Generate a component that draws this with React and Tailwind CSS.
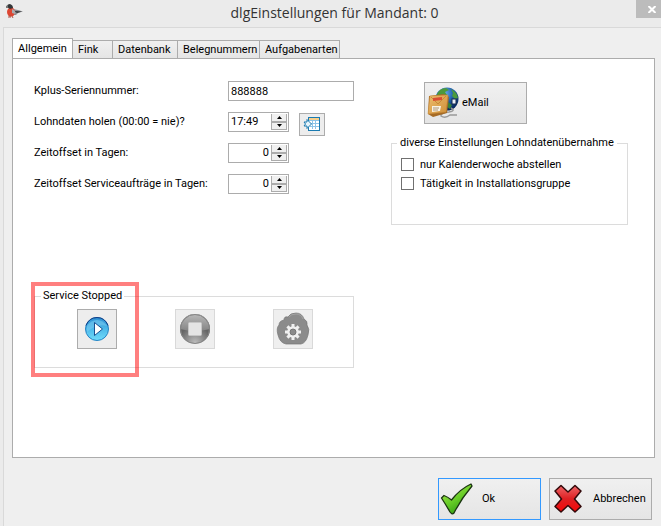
import React, { useState } from 'react';

const tabs = [
    { name: 'Allgemein', width: 'w-[61px]' },
    { name: 'Fink', width: 'w-10' },
    { name: 'Datenbank', width: 'w-[65px]' },
    { name: 'Belegnummern', width: 'w-[82px]' },
    { name: 'Aufgabenarten', width: 'w-20' },
];

const BirdIcon = () => (
    <svg width="18" height="16" viewBox="0 0 18 16" aria-hidden="true">
        <path d="M7 5 L12 6 L17 7.5 L12 9 L10 11 L5 11 Z" fill="#8d8f94" />
        <path d="M8 7 L16 7.5 L11 9 Z" fill="#333" />
        <ellipse cx="5" cy="8" rx="4" ry="4.5" fill="#dd4632" />
        <path d="M6 5 Q10 6 9 10 L6 9 Z" fill="#a9aaae" />
        <path d="M1 3 Q1 0 4 0 Q7 1 7 4 L4 5 Z" fill="#333638" />
        <path d="M0 2 L2 1 L2 4 L0 4 Z" fill="#777" />
        <path d="M2 13 H5 M6 12 L7 14 M4 11 L4 13" stroke="#ad5145" fill="none" />
    </svg>
);

const ImportTableIcon = () => (
    <svg width="18" height="16" viewBox="0 0 18 16" aria-hidden="true">
        <rect x="5.5" y="1.5" width="11" height="13" fill="#fff" stroke="#1a7ab0" />
        <rect x="6" y="2" width="10" height="2" fill="#f6cf8b" />
        <path d="M6 4.5 H16 M7 7.5 H16 M7 10.5 H16 M9.5 4 V13 M12.5 4 V13" stroke="#8cc3e8" />
        <path d="M1 6 H4 V3.5 L8.5 8 L4 12.5 V10 H1 L2.5 8 Z" fill="#e6f4fb" stroke="#1a7ab0" />
    </svg>
);

const MailIcon = () => (
    <svg width="34" height="34" viewBox="0 0 34 34" aria-hidden="true">
        <defs>
            <radialGradient id="globe" cx="0.4" cy="0.25" r="0.75">
                <stop offset="0" stopColor="#69aee8" />
                <stop offset="0.5" stopColor="#2161ac" />
                <stop offset="1" stopColor="#06245a" />
            </radialGradient>
            <linearGradient id="parcel" x1="0" y1="0" x2="1" y2="1">
                <stop offset="0" stopColor="#edbd6e" />
                <stop offset="1" stopColor="#cf8f38" />
            </linearGradient>
        </defs>
        <circle cx="20" cy="13" r="11.5" fill="url(#globe)" />
        <path d="M10 8 Q13 2 19 2 L22 4 L18 6 L20 9 L16 11 L10 10 Z M24 3 Q30 6 31 12 L28 13 L25 10 L26 7 Z" fill="#4c9a3c" />
        <path d="M21 16 L25 19 L23 23 L20 21 Z" fill="#39823a" />
        <rect x="25" y="13" width="4" height="5" fill="#e9eef5" stroke="#172b4e" />
        <path d="M24 22 Q29 25 22 26 Q13 27 14 30 Q18 33 23 29 L30 29" fill="none" stroke="#999" strokeWidth="1.5" />
        <path d="M2 10 L17 8 L22 11 L20 27 L6 31 L1 28 Z" fill="#a66b25" />
        <path d="M3 10 L21 9 L19 26 L1 28 Z" fill="url(#parcel)" stroke="#c88b38" strokeWidth="0.5" />
        <path d="M4 11 L11 18 L19 10" fill="none" stroke="#c88b38" />
        <path d="M6 12 L15 11 L15 14 L6 15 Z" fill="#d94d32" />
        <path d="M5 20 L14 20 L13 25 L5 26 Z" fill="#f8f2e4" />
        <path d="M6 22 L12 22 M6 24 L11 24" stroke="#8d6d4a" strokeWidth="0.7" />
    </svg>
);

const PlayIcon = () => (
    <svg width="26" height="26" viewBox="0 0 26 26" aria-hidden="true">
        <defs>
            <linearGradient id="play" x1="0" y1="0" x2="0" y2="1">
                <stop offset="0" stopColor="#2e8fd2" />
                <stop offset="0.5" stopColor="#4db9e9" />
                <stop offset="1" stopColor="#71dcfb" />
            </linearGradient>
        </defs>
        <circle cx="13" cy="13" r="11.5" fill="url(#play)" stroke="#2583c4" />
        <path d="M2 9.5 Q5 1.5 13 1.5 Q21 1.5 24 9.5" fill="none" stroke="#123f88" />
        <path d="M3 10 Q7 4 13 4 Q19 4 23 10 Q13 7 3 16 Z" fill="#78c9f0" opacity="0.6" />
        <path d="M10.5 6.5 L18.5 13 L10.5 19.5 Z" fill="#fff" stroke="#174f91" />
    </svg>
);

const StopIcon = () => (
    <svg width="32" height="32" viewBox="0 0 32 32" aria-hidden="true">
        <defs>
            <linearGradient id="stopTop" x1="0" y1="0" x2="0" y2="1">
                <stop offset="0" stopColor="#b9b9b9" />
                <stop offset="1" stopColor="#848484" />
            </linearGradient>
            <radialGradient id="stopBottom" cx="0.5" cy="0.95" r="0.55">
                <stop offset="0" stopColor="#bcbcbc" />
                <stop offset="1" stopColor="#656565" />
            </radialGradient>
        </defs>
        <circle cx="16" cy="16" r="15" fill="url(#stopBottom)" />
        <path d="M1 16 A15 15 0 0 1 31 16 Q16 20 1 16 Z" fill="url(#stopTop)" />
        <circle cx="16" cy="16" r="14.5" fill="none" stroke="#858585" />
        <rect x="9.5" y="9.5" width="13" height="13" rx="1" fill="#e4e4e4" stroke="#c6c6c6" />
    </svg>
);

const CloudGearIcon = () => (
    <svg width="34" height="34" viewBox="0 0 34 34" aria-hidden="true">
        <path
            d="M10 32 Q4 31 2 23 Q0 16 3 13 Q3 9 8 8 Q8 4 12 5 Q14 1 20 1 Q26 1 28 7 Q32 9 31 13 Q34 17 32 23 Q30 31 25 32 Z"
            fill="#8b8b8b"
            stroke="#777"
            strokeWidth="0.7"
        />
        <path d="M13 5 Q15 2 20 2 Q25 2 27 7" fill="none" stroke="#a3a3a3" />
        <g stroke="#f0f0f0" strokeWidth="3">
            <path d="M17 12 V28 M9 20 H25 M11.4 14.4 L22.6 25.6 M22.6 14.4 L11.4 25.6" />
        </g>
        <circle cx="17" cy="20" r="5.8" fill="#f0f0f0" />
        <circle cx="17" cy="20" r="3" fill="#8b8b8b" stroke="#777" />
    </svg>
);

const CheckIcon = () => (
    <svg width="34" height="34" viewBox="0 0 34 34" aria-hidden="true">
        <defs>
            <linearGradient id="check" x1="0" y1="0" x2="0.6" y2="1">
                <stop offset="0" stopColor="#b8ee55" />
                <stop offset="0.6" stopColor="#65cb26" />
                <stop offset="1" stopColor="#2f9b12" />
            </linearGradient>
        </defs>
        <path
            d="M1.5 16 L4 13.5 Q8 15 11.5 18 Q20 7 31 2 L32 4 Q21 17 14 31 Q12 33 10 30 Q6 23 1.5 16 Z"
            fill="url(#check)"
            stroke="#1b3511"
            strokeWidth="1.3"
            strokeLinejoin="round"
        />
    </svg>
);

const CrossIcon = () => (
    <svg width="30" height="30" viewBox="0 0 30 30" aria-hidden="true">
        <defs>
            <linearGradient id="cross" x1="0" y1="0" x2="0" y2="1">
                <stop offset="0" stopColor="#ed6668" />
                <stop offset="0.5" stopColor="#de2023" />
                <stop offset="1" stopColor="#f50707" />
            </linearGradient>
        </defs>
        <path
            d="M8 1.5 L15 8 L22 1.5 L28 7 L21.5 15 L28 22.5 L22 28 L15 21.5 L8 28 L2 22.5 L8.5 15 L2 7 Z"
            fill="url(#cross)"
            stroke="#32090a"
            strokeWidth="1.5"
            strokeLinejoin="round"
        />
    </svg>
);

const SpinButtons = ({ label, onUp, onDown }) => (
    <span className="flex w-4 flex-col border-l border-[#acacac]">
        <button
            type="button"
            aria-label={`${label} erhöhen`}
            onClick={onUp}
            className="flex flex-1 items-center justify-center border-r border-b border-[#acacac] bg-[#f0f0f0]">
            <svg width="5" height="3" viewBox="0 0 5 3"><path d="M0 3 L2.5 0 L5 3 Z" /></svg>
        </button>
        <button
            type="button"
            aria-label={`${label} verringern`}
            onClick={onDown}
            className="flex flex-1 items-center justify-center border-t border-r border-b border-[#acacac] bg-[#f0f0f0]">
            <svg width="5" height="3" viewBox="0 0 5 3"><path d="M0 0 L2.5 3 L5 0 Z" /></svg>
        </button>
    </span>
);

const SpinField = ({ id, label, value, setValue, align, onStep }) => (
    <span className="flex h-5 w-[61px] border border-[#acacac] bg-white p-px">
        <input
            id={id}
            value={value}
            onChange={(e) => setValue(e.target.value)}
            className={`min-w-0 flex-1 outline-none ${align === 'right' ? 'pr-0.5 text-right' : 'pl-px'}`}
        />
        <SpinButtons label={label} onUp={() => onStep(1)} onDown={() => onStep(-1)} />
    </span>
);

const CheckRow = ({ label }) => (
    <label className="flex h-[19px] items-center gap-1.5">
        <input type="checkbox" className="size-[13px] appearance-none border border-[#707070] bg-white checked:bg-[#707070]" />
        {label}
    </label>
);

const stepTime = (time, step) => {
    const [hours, minutes] = time.split(':').map(Number);
    const total = (hours * 60 + minutes + step + 1440) % 1440;
    return `${String(Math.floor(total / 60)).padStart(2, '0')}:${String(total % 60).padStart(2, '0')}`;
};

const App = () => {
    const [activeTab, setActiveTab] = useState('Allgemein');
    const [serial, setSerial] = useState('888888');
    const [time, setTime] = useState('17:49');
    const [offset, setOffset] = useState('0');
    const [serviceOffset, setServiceOffset] = useState('0');

    return (
        <div className="flex min-h-screen flex-col bg-[#ebebeb] font-['Roboto','Liberation_Sans',sans-serif] text-[11px] leading-4 text-black">
            <header className="flex h-[27px] items-start">
                <div className="w-[47px] pt-1 pl-1.5">
                    <BirdIcon />
                </div>
                <h1 className="flex-1 pl-2 text-center font-['Open_Sans',sans-serif] text-[14px] leading-[26px] text-[#333]">
                    dlgEinstellungen für Mandant: 0
                </h1>
                <div className="flex w-[47px] justify-end">
                    <button type="button" aria-label="Schließen" className="flex h-[18px] w-[25px] items-center justify-center bg-[#bcbcbc] pl-1.5">
                        <svg width="8" height="7" viewBox="0 0 8 7" aria-hidden="true">
                            <path d="M0.5 0 L7.5 7 M7.5 0 L0.5 7" stroke="#fff" strokeWidth="2" />
                        </svg>
                    </button>
                </div>
            </header>

            <div className="ml-[3px] flex flex-1 flex-col border-t border-l border-[#d9d9d9] bg-[#efefef] pt-2.5 pr-1.5 pl-2">
                <div role="tablist" className="-mb-px flex items-end">
                    {tabs.map((tab) => (
                        <button
                            key={tab.name}
                            type="button"
                            role="tab"
                            aria-selected={activeTab === tab.name}
                            onClick={() => setActiveTab(tab.name)}
                            className={`border border-[#acacac] whitespace-nowrap ${tab.width} ${
                                activeTab === tab.name
                                    ? 'h-[21px] border-b-white bg-white'
                                    : 'h-[19px] border-l-0 bg-linear-to-b from-[#f0f0f0] to-[#e5e5e5] pl-[5px] text-left'
                            }`}>
                            {tab.name}
                        </button>
                    ))}
                </div>

                <main className="flex-1 border border-[#acacac] bg-white pt-[22px] pr-[26px] pb-20 pl-[21px]">
                    <div className="grid grid-cols-[320px_1fr] gap-[37px]">
                        <div>
                            <div className="flex flex-col gap-[11px]">
                                <div className="flex h-5 items-center">
                                    <label htmlFor="serial" className="w-[194px]">Kplus-Seriennummer:</label>
                                    <input
                                        id="serial"
                                        value={serial}
                                        onChange={(e) => setSerial(e.target.value)}
                                        className="h-5 min-w-0 flex-1 border border-[#acacac] px-0.5 outline-none"
                                    />
                                </div>
                                <div className="flex h-5 items-center">
                                    <label htmlFor="time" className="w-[194px]">Lohndaten holen (00:00 = nie)?</label>
                                    <SpinField id="time" label="Uhrzeit" value={time} setValue={setTime} onStep={(step) => setTime(stepTime(time, step))} />
                                    <button
                                        type="button"
                                        aria-label="Lohndaten jetzt holen"
                                        className="mt-1 ml-2.5 flex h-[23px] w-[26px] items-center justify-center border border-[#acacac] bg-[#ededed]">
                                        <ImportTableIcon />
                                    </button>
                                </div>
                                <div className="flex h-5 items-center">
                                    <label htmlFor="offset" className="w-[194px]">Zeitoffset in Tagen:</label>
                                    <SpinField id="offset" label="Zeitoffset" align="right" value={offset} setValue={setOffset} onStep={(step) => setOffset(String(Number(offset) + step))} />
                                </div>
                                <div className="flex h-5 items-center">
                                    <label htmlFor="serviceOffset" className="w-[194px]">Zeitoffset Serviceaufträge in Tagen:</label>
                                    <SpinField id="serviceOffset" label="Zeitoffset Service" align="right" value={serviceOffset} setValue={setServiceOffset} onStep={(step) => setServiceOffset(String(Number(serviceOffset) + step))} />
                                </div>
                            </div>

                            <div className="relative mt-[94px]">
                                <fieldset className="h-20 border border-[#dcdcdc] pr-10 pl-[42px]">
                                    <legend className="-ml-9 px-0.5">Service Stopped</legend>
                                    <div className="mt-[5px] flex justify-between">
                                        <button type="button" aria-label="Dienst starten" className="flex size-10 items-center justify-center border border-[#acacac] bg-[#ededed]">
                                            <PlayIcon />
                                        </button>
                                        <button type="button" disabled aria-label="Dienst anhalten" className="flex size-10 items-center justify-center border border-[#d9d9d9] bg-[#efefef]">
                                            <StopIcon />
                                        </button>
                                        <button type="button" disabled aria-label="Dienst konfigurieren" className="flex size-10 items-center justify-center border border-[#d9d9d9] bg-[#efefef]">
                                            <CloudGearIcon />
                                        </button>
                                    </div>
                                </fieldset>
                                {/* highlight around the start button */}
                                <div className="pointer-events-none absolute -top-1.5 -left-[3px] h-[95px] w-[108px] border-4 border-[#ff0000]/50" />
                            </div>
                        </div>

                        <div className="pt-px">
                            <button type="button" className="ml-[33px] flex h-[42px] w-[103px] items-center gap-px border border-[#acacac] bg-linear-to-b from-[#f0f0f0] to-[#e5e5e5] pl-0.5">
                                <MailIcon />
                                eMail
                            </button>
                            <fieldset className="mt-[11px] h-[90px] border border-[#dcdcdc] px-[9px]">
                                <legend className="-ml-1 px-[3px] whitespace-nowrap">diverse Einstellungen Lohndatenübernahme</legend>
                                <div className="pt-1">
                                    <CheckRow label="nur Kalenderwoche abstellen" />
                                    <CheckRow label="Tätigkeit in Installationsgruppe" />
                                </div>
                            </fieldset>
                        </div>
                    </div>
                </main>

                <footer className="flex justify-end gap-2 pt-5 pr-[3px] pb-1.5">
                    <button type="button" className="flex h-[42px] w-[103px] items-center gap-2 border border-[#3399ff] bg-linear-to-b from-[#f0f0f0] to-[#e5e5e5] pl-px">
                        <CheckIcon />
                        Ok
                    </button>
                    <button type="button" className="flex h-[42px] w-[103px] items-center gap-2.5 border border-[#acacac] bg-linear-to-b from-[#f0f0f0] to-[#e5e5e5] pl-[3px]">
                        <CrossIcon />
                        Abbrechen
                    </button>
                </footer>
            </div>
        </div>
    );
};

export default App;
